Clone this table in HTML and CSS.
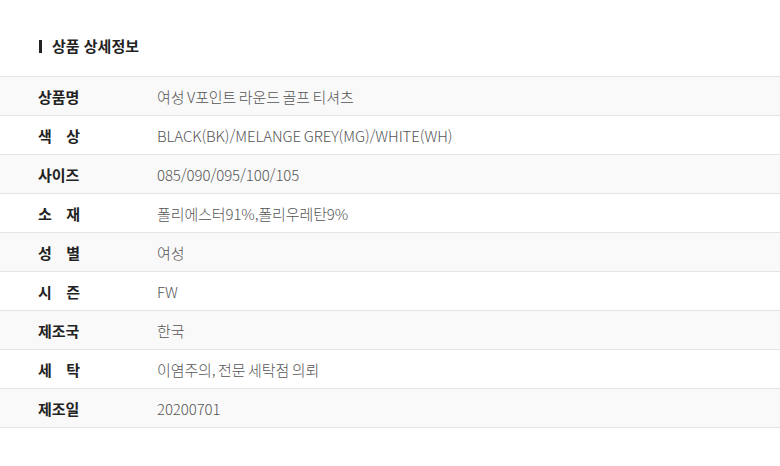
FILE: index.html
```html
<!DOCTYPE html>
<html lang="ko">
<head>
<meta charset="utf-8">
<link rel="stylesheet" href="styles.css">
</head>
<body>
<section class="detail">
  <h2 class="title">상품 상세정보</h2>
  <div class="table">
    <div class="row alt"><div class="label">상품명</div><div class="value">여성 V포인트 라운드 골프 티셔츠</div></div>
    <div class="row"><div class="label">색 상</div><div class="value">BLACK(BK)/MELANGE GREY(MG)/WHITE(WH)</div></div>
    <div class="row alt"><div class="label">사이즈</div><div class="value">085/090/095/100/105</div></div>
    <div class="row"><div class="label">소 재</div><div class="value">폴리에스터91%,폴리우레탄9%</div></div>
    <div class="row alt"><div class="label">성 별</div><div class="value">여성</div></div>
    <div class="row"><div class="label">시 즌</div><div class="value">FW</div></div>
    <div class="row alt"><div class="label">제조국</div><div class="value">한국</div></div>
    <div class="row"><div class="label">세 탁</div><div class="value">이염주의, 전문 세탁점 의뢰</div></div>
    <div class="row alt"><div class="label">제조일</div><div class="value">20200701</div></div>
  </div>
</section>
</body>
</html>
```
FILE: styles.css
```css
html, body {
  margin: 0;
  padding: 0;
  background: #fff;
}
body {
  font-family: "Noto Sans CJK KR", "Noto Sans", sans-serif;
  color: #222;
}
.detail {
  padding-top: 35px;
}
.title {
  margin: 0 0 0 39px;
  height: 22px;
  display: flex;
  align-items: center;
  gap: 10px;
  font-size: 15px;
  font-weight: 700;
  color: #222;
  line-height: 22px;
}
.title::before {
  content: "";
  width: 3px;
  height: 13px;
  background: #222;
}
.table {
  margin-top: 19px;
  border-top: 1px solid #e4e4e4;
}
.row {
  display: flex;
  align-items: center;
  height: 38px;
  border-bottom: 1px solid #e4e4e4;
  background: #fff;
}
.row.alt {
  background: #f9f9f9;
}
.label {
  width: 42px;
  margin-left: 38px;
  font-size: 15px;
  font-weight: 700;
  color: #222;
  text-align: justify;
  text-align-last: justify;
  white-space: nowrap;
}
.value {
  margin-left: 77px;
  font-size: 15px;
  font-weight: 300;
  color: #555;
  letter-spacing: -0.1px;
  word-spacing: -1.5px;
}
```
